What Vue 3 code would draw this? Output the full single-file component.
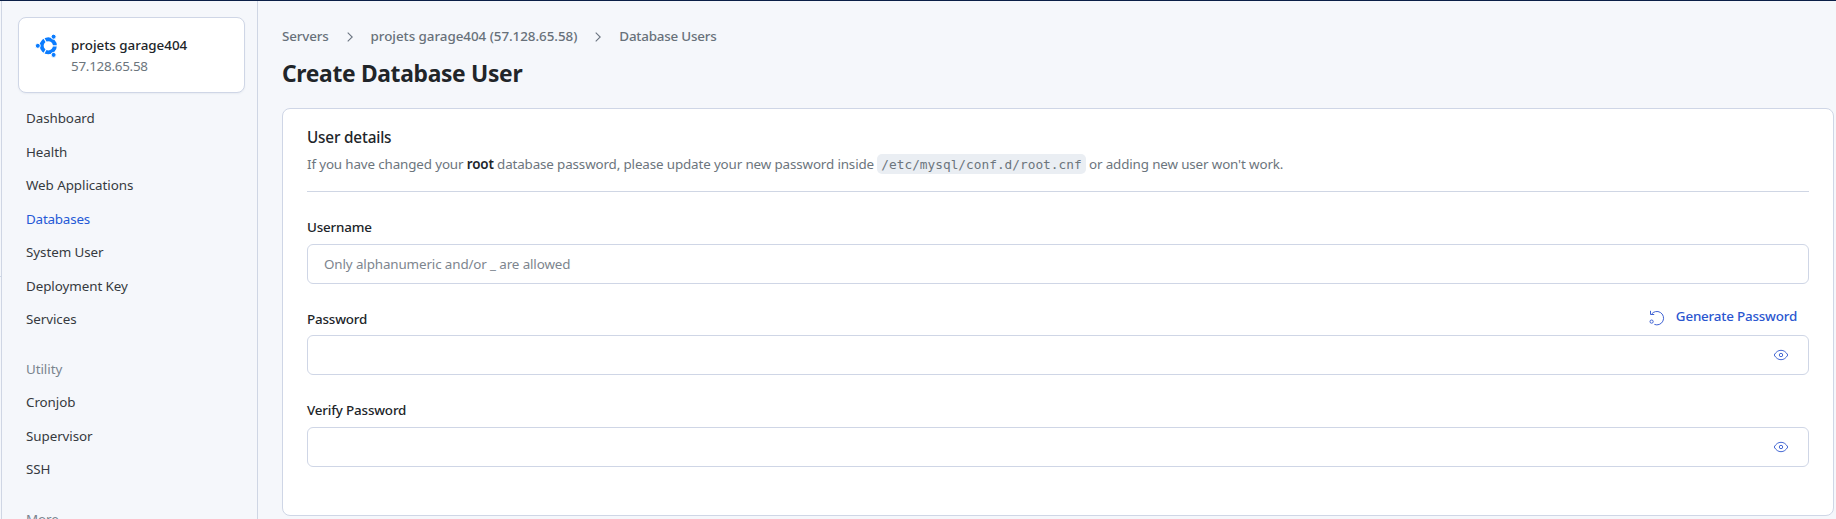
<script setup>
const groups = [
  {
    title: '',
    items: ['Dashboard', 'Health', 'Web Applications', 'Databases', 'System User', 'Deployment Key', 'Services'],
  },
  { title: 'Utility', items: ['Cronjob', 'Supervisor', 'SSH'] },
  { title: 'More', items: [] },
]
const active = 'Databases'
const crumbs = ['Servers', 'projets garage404 (57.128.65.58)', 'Database Users']
</script>

<template>
  <div class="page">
    <div class="rail"></div>
    <aside class="sidebar">
      <div class="server">
        <svg class="logo" width="24" height="24" viewBox="0 0 24 24">
          <circle cx="13.3" cy="11.8" r="6.6" fill="none" stroke="#0a7cff" stroke-width="3.9" />
          <path d="M13.3 11.8H24M13.3 11.8L8.2 3M13.3 11.8L8.2 20.6" stroke="#fff" stroke-width="1.2" />
          <g fill="#0a7cff" stroke="#fff" stroke-width="1">
            <circle cx="2.8" cy="11.8" r="2.5" />
            <circle cx="18.6" cy="2.7" r="2.5" />
            <circle cx="18.6" cy="20.9" r="2.5" />
          </g>
        </svg>
        <div>
          <div class="name">projets garage404</div>
          <div class="ip">57.128.65.58</div>
        </div>
      </div>
      <nav>
        <div v-for="g in groups" :key="g.title" class="group">
          <div v-if="g.title" class="item heading">{{ g.title }}</div>
          <a v-for="i in g.items" :key="i" class="item" :class="{ active: i === active }">{{ i }}</a>
        </div>
      </nav>
    </aside>

    <main>
      <div class="crumbs">
        <template v-for="(c, n) in crumbs" :key="c">
          <svg v-if="n" width="6" height="10" viewBox="0 0 6 10">
            <path d="M.7 .7L5.2 5L.7 9.3" fill="none" stroke="#6b7480" stroke-width="1.1" />
          </svg>
          <span :class="'crumb c' + n">{{ c }}</span>
        </template>
      </div>
      <h1>Create Database User</h1>

      <section class="card">
        <h2>User details</h2>
        <p class="desc">
          If you have changed your <b>root</b> database password, please update your new password inside
          <code>/etc/mysql/conf.d/root.cnf</code> or adding new user won't work.
        </p>
        <div class="field">
          <div class="label-row"><label>Username</label></div>
          <div class="input"><span class="placeholder">Only alphanumeric and/or _ are allowed</span></div>
        </div>
        <div class="field second">
          <div class="label-row">
            <label>Password</label>
            <a class="generate">
              <svg width="16" height="16" viewBox="0 0 16 16" fill="none" stroke="#3f62d3" stroke-width="1">
                <path d="M2.4 4.3A6.7 6.7 0 1 1 5.4 14.4" />
                <path d="M1.5 .8V4.5H5.2" />
                <circle cx="2.6" cy="11.6" r="1.6" />
              </svg>
              <span>Generate Password</span>
            </a>
          </div>
          <div class="input">
            <svg width="16" height="12" viewBox="0 0 16 12" fill="none" stroke="#4669d4" stroke-width="1">
              <path d="M1.2 6C3 2.8 5.3 1.3 8 1.3S13 2.8 14.8 6C13 9.2 10.7 10.7 8 10.7S3 9.2 1.2 6Z" />
              <circle cx="8" cy="6" r="1.7" />
            </svg>
          </div>
        </div>
        <div class="field">
          <div class="label-row"><label>Verify Password</label></div>
          <div class="input">
            <svg width="16" height="12" viewBox="0 0 16 12" fill="none" stroke="#4669d4" stroke-width="1">
              <path d="M1.2 6C3 2.8 5.3 1.3 8 1.3S13 2.8 14.8 6C13 9.2 10.7 10.7 8 10.7S3 9.2 1.2 6Z" />
              <circle cx="8" cy="6" r="1.7" />
            </svg>
          </div>
        </div>
      </section>
    </main>
  </div>
</template>

<style>
body {
  overflow: hidden;
}
</style>

<style scoped>
.page {
  box-sizing: border-box;
  display: flex;
  height: 519px;
  overflow: hidden;
  border-top: 1px solid #0b1f47;
  background: #f5f7fb;
  color: #212529;
  font: 13.4px/20px "Noto Sans", "Open Sans", sans-serif;
}
.page * {
  box-sizing: border-box;
}
.rail {
  flex: none;
  width: 1px;
  height: 1px;
  margin-top: 275px;
  background: #cfd9e6;
}
.sidebar {
  flex: none;
  width: 257px;
  height: 518px;
  padding: 16px 12px 0 16px;
  border: solid #cfd6e4;
  border-width: 0 1px;
}
.server {
  display: flex;
  gap: 12px;
  height: 76px;
  padding: 16px 0 0 16px;
  border: 1px solid #cfd6e6;
  border-radius: 8px;
  background: #fff;
  box-shadow: 0 1px 2px rgba(40, 60, 100, 0.06);
}
.logo {
  flex: none;
}
.name {
  margin-top: 1px;
  font-weight: 500;
}
.ip {
  margin-top: 1px;
  color: #6c757d;
  letter-spacing: -0.25px;
}
nav {
  padding: 15px 0 0 8px;
  letter-spacing: -0.07px;
}
.item {
  display: block;
  height: 33.5px;
  color: #363a40;
}
.item.active {
  color: #2459d6;
  letter-spacing: -0.2px;
}
.item.heading {
  color: #7a848e;
}
.group + .group {
  margin-top: 16px;
}
main {
  flex: 1;
  padding: 25px 2px 0 24px;
}
.crumbs {
  display: flex;
  align-items: center;
  height: 20px;
  color: #68717a;
  font-weight: 500;
}
.crumbs svg {
  margin: 2px 18px 0 18px;
}
.crumb {
  letter-spacing: -0.04px;
}
.c0 {
  letter-spacing: -0.15px;
}
.c2 {
  letter-spacing: -0.2px;
}
h1 {
  margin: 12px 0 0;
  font-size: 22.8px;
  line-height: 32px;
  font-weight: 700;
  letter-spacing: -0.31px;
  color: #212529;
}
.card {
  height: 408px;
  margin-top: 18px;
  padding: 17px 24px 0;
  border: 1px solid #cfd6e6;
  border-radius: 8px;
  background: #fff;
}
h2 {
  margin: 0;
  font-size: 15.3px;
  line-height: 22px;
  font-weight: 500;
  letter-spacing: -0.18px;
}
.desc {
  height: 38px;
  margin: 6px 0 0;
  border-bottom: 1px solid #cfd6e4;
  color: #6c757d;
  letter-spacing: -0.137px;
  white-space: nowrap;
}
.desc b {
  color: #212529;
  font-weight: 600;
}
code {
  padding: 3px 4px 2px;
  border-radius: 5px;
  background: #eaeef3;
  font: 12.8px "DejaVu Sans Mono", monospace;
  letter-spacing: 0;
}
.field {
  margin-top: 25px;
}
.label-row {
  display: flex;
  justify-content: space-between;
  height: 27px;
}
.second .label-row {
  height: 26px;
}
label {
  font-weight: 500;
  letter-spacing: -0.17px;
}
.generate {
  display: flex;
  gap: 11px;
  margin: -3px 12px 0 0;
  color: #2a56cf;
  font-weight: 500;
  letter-spacing: -0.19px;
}
.generate svg {
  margin-top: 4px;
}
.input {
  display: flex;
  align-items: center;
  height: 40px;
  padding: 0 19px 0 16px;
  border: 1px solid #cfd6e6;
  border-radius: 6px;
}
.input svg {
  margin-left: auto;
}
.placeholder {
  color: #7d858e;
  letter-spacing: -0.12px;
}
</style>
